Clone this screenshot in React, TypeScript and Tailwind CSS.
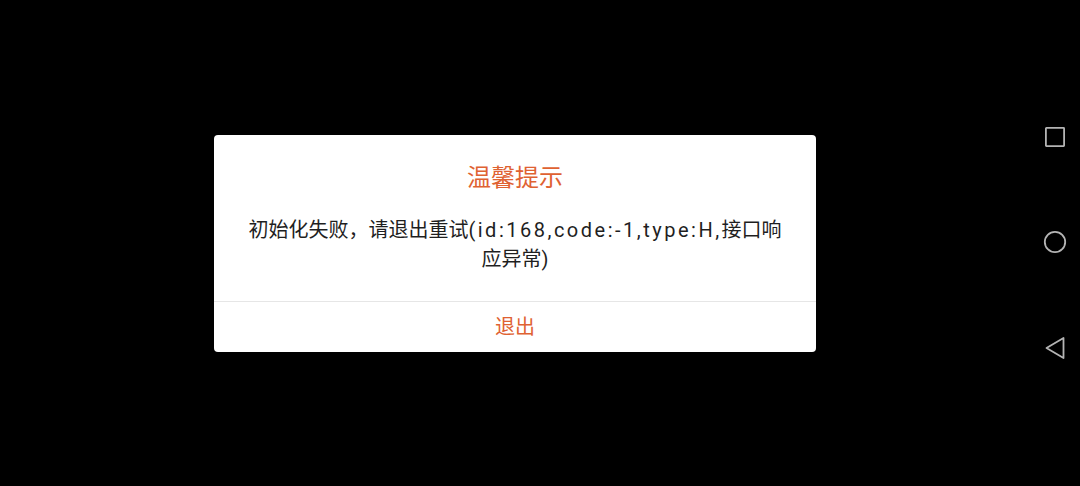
export default function App() {
  return (
    <div className="flex h-[486px] w-[1080px] bg-black font-['Roboto','Noto_Sans_CJK_SC',sans-serif]">
      {/* Screen area */}
      <div className="flex flex-1 items-center justify-center">
        <div className="w-[602px] rounded-[4px] bg-white">
          <div className="px-[30px] pt-[27px] pb-[27px] text-center">
            <h2 className="text-[24px] leading-[32px] text-[#df6232]">温馨提示</h2>
            <p className="mt-[22px] text-[20px] leading-[29px] text-[#1f1f1f]">
              初始化失败，请退出重试<span className="tracking-[2.5px]">(id:168,code:-1,type:H,</span>接口响应异常)
            </p>
          </div>
          <div className="h-px bg-[#e6e6e6]" />
          <button className="flex h-[50px] w-full items-center justify-center text-[20px] text-[#df6232]">
            退出
          </button>
        </div>
      </div>

      {/* Navigation bar */}
      <div className="flex w-[50px] flex-col items-center justify-center gap-[82px] pr-[1px]">
        <svg width="22" height="22" viewBox="0 0 22 22" fill="none" stroke="#b4b4b4" strokeWidth="1.8">
          <rect x="1.9" y="1.9" width="18.2" height="18.2" rx="0.5" />
        </svg>
        <svg width="24" height="24" viewBox="0 0 24 24" fill="none" stroke="#b4b4b4" strokeWidth="1.8">
          <circle cx="12" cy="12" r="10.2" />
        </svg>
        <svg width="22" height="24" viewBox="0 0 22 24" fill="none" stroke="#b4b4b4" strokeWidth="1.8" strokeLinejoin="round">
          <path d="M2.5 12 L19.5 2 L19.5 22 Z" />
        </svg>
      </div>
    </div>
  );
}
